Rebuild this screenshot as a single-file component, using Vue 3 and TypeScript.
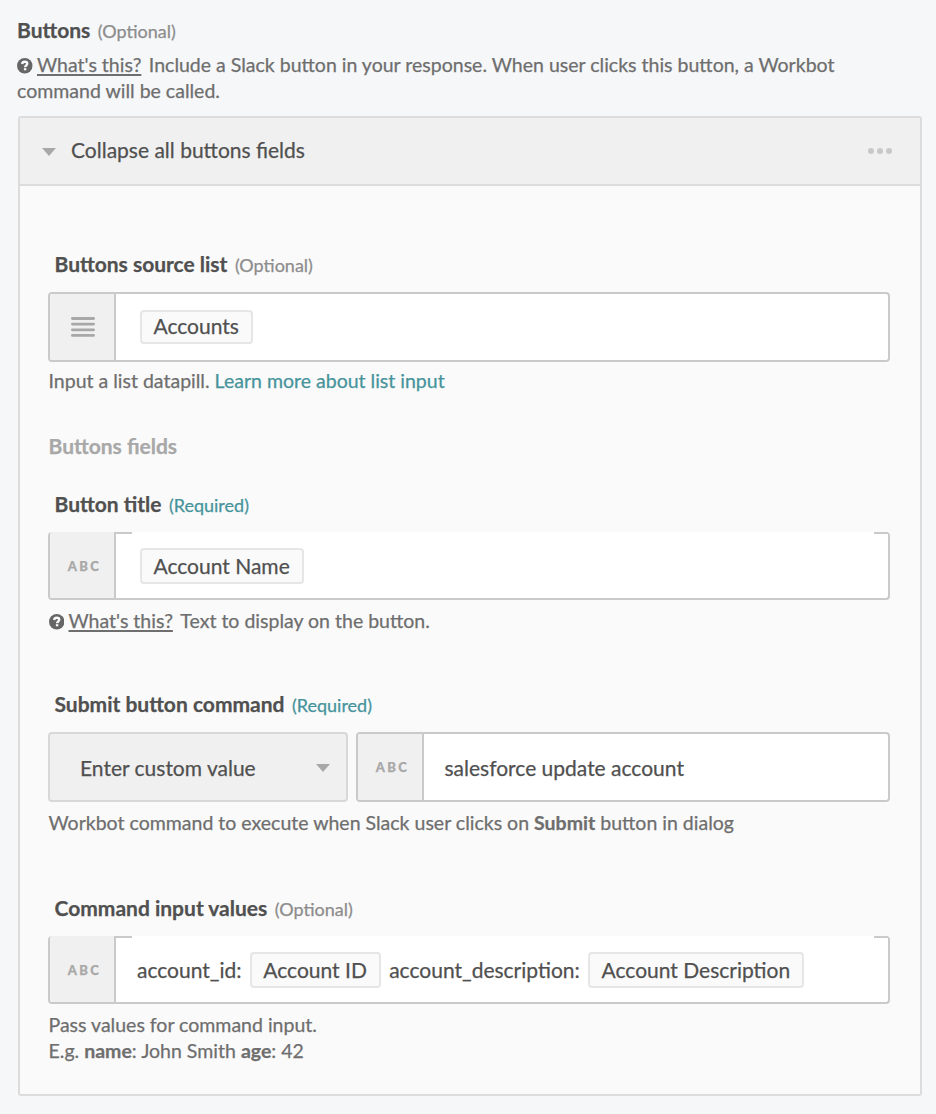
<script setup lang="ts">
interface Segment {
  kind: 'text' | 'pill'
  value: string
}

const commandInputs: Segment[] = [
  { kind: 'text', value: 'account_id:' },
  { kind: 'pill', value: 'Account ID' },
  { kind: 'text', value: 'account_description:' },
  { kind: 'pill', value: 'Account Description' },
]
</script>

<template>
  <main class="form">
    <div class="label outer"><b>Buttons</b><span class="hint">(Optional)</span></div>
    <p class="help intro">
      <svg class="question" viewBox="0 0 16 16"><circle cx="8" cy="8" r="8" /><path d="M5.3 6.2C5.5 4.6 6.6 3.9 8 3.9c1.5 0 2.6.8 2.6 2.1 0 1.8-2.2 1.7-2.2 3.5" /><rect x="7.1" y="10.5" width="2.5" height="2.2" /></svg><span class="what">What's this?</span>Include a Slack button in your response. When user clicks this button, a Workbot command will be called.
    </p>

    <section class="panel">
      <header class="panel-head">
        <svg class="caret" viewBox="0 0 14 8"><path d="M0 0h14L7 8z" /></svg>
        <span class="panel-title">Collapse all buttons fields</span>
        <span class="dots"><i></i><i></i><i></i></span>
      </header>

      <div class="panel-body">
        <div class="label"><b>Buttons source list</b><span class="hint">(Optional)</span></div>
        <div class="input tall">
          <div class="type icon">
            <svg class="list" viewBox="0 0 24 20"><path d="M1.4 1.5h21.2M1.4 7.1h21.2M1.4 12.8h21.2M1.4 18.4h21.2" /></svg>
          </div>
          <div class="content"><span class="pill short">Accounts</span></div>
        </div>
        <p class="help">Input a list datapill. <a class="link">Learn more about list input</a></p>

        <h3 class="group">Buttons fields</h3>

        <div class="label"><b>Button title</b><span class="hint required">(Required)</span></div>
        <div class="input open">
          <div class="type">ABC</div>
          <div class="content"><span class="pill">Account Name</span></div>
        </div>
        <p class="help after-open">
          <svg class="question" viewBox="0 0 16 16"><circle cx="8" cy="8" r="8" /><path d="M5.3 6.2C5.5 4.6 6.6 3.9 8 3.9c1.5 0 2.6.8 2.6 2.1 0 1.8-2.2 1.7-2.2 3.5" /><rect x="7.1" y="10.5" width="2.5" height="2.2" /></svg><span class="what">What's this?</span>Text to display on the button.
        </p>

        <div class="label submit"><b>Submit button command</b><span class="hint required">(Required)</span></div>
        <div class="row">
          <div class="select">
            <span>Enter custom value</span>
            <svg class="caret" viewBox="0 0 14 8"><path d="M0 0h14L7 8z" /></svg>
          </div>
          <div class="input tall">
            <div class="type">ABC</div>
            <div class="content plain">salesforce update account</div>
          </div>
        </div>
        <p class="help after-row">Workbot command to execute when Slack user clicks on <b>Submit</b> button in dialog</p>

        <div class="label command"><b>Command input values</b><span class="hint">(Optional)</span></div>
        <div class="input open">
          <div class="type">ABC</div>
          <div class="content mixed">
            <span v-for="part in commandInputs" :key="part.value" :class="part.kind">{{ part.value }}</span>
          </div>
        </div>
        <p class="help after-open">Pass values for command input.<br />E.g. <b>name</b>: John Smith <b>age</b>: 42</p>
      </div>
    </section>
  </main>
</template>

<style>
body {
  margin: 0;
  background: #f6f7f9;
}
</style>

<style scoped>
.form {
  box-sizing: border-box;
  width: 936px;
  height: 1114px;
  padding: 16px 14px 0 18px;
  overflow: hidden;
  background: #f6f7f9;
  color: #505050;
  font-family: Lato, "Liberation Sans", sans-serif;
  font-size: 21px;
  line-height: 26px;
  -webkit-text-stroke: 0.25px currentColor;
}
.label {
  display: flex;
  align-items: baseline;
  height: 30px;
  padding-left: 6.5px;
  line-height: 27px;
}
.label b {
  font-weight: 700;
}
.label.outer {
  padding-left: 0;
  margin-left: -1px;
}
.hint {
  margin-left: 7.5px;
  color: #8c8c8c;
  font-size: 18px;
}
.hint.required {
  color: #46939b;
}
.help {
  height: 26px;
  margin: 6px 0 0 0.5px;
  color: #6e6e6e;
  font-size: 19.53px;
  line-height: 26px;
}
.help.intro {
  width: 860px;
  height: 52px;
  margin: 6px 0 12px -1px;
}
.question {
  width: 15.5px;
  height: 15.5px;
  margin-right: 4.5px;
  vertical-align: -1.5px;
  fill: #666;
}
.question path {
  fill: none;
  stroke: #fafafa;
  stroke-width: 2.4;
}
.question rect {
  fill: #fafafa;
}
.what {
  margin-right: 7.5px;
  text-decoration: underline;
  text-decoration-thickness: 2px;
  text-decoration-skip-ink: none;
  text-underline-offset: 2px;
}
.panel {
  box-sizing: border-box;
  height: 980px;
  border: 2px solid #dcdcdc;
  border-radius: 3px;
  background: #fafafa;
}
.panel-head {
  display: flex;
  align-items: center;
  height: 66px;
  padding: 0 28px 0 22px;
  border-bottom: 2px solid #dcdcdc;
  background: #f0f0f0;
}
.caret {
  width: 14px;
  height: 8px;
  fill: #a8a8a8;
}
.panel-head .caret {
  margin-top: 2px;
}
.panel-title {
  margin: 0 0 2px 15px;
}
.dots {
  display: flex;
  gap: 3px;
  margin-left: auto;
}
.dots i {
  width: 6px;
  height: 6px;
  border-radius: 50%;
  background: #c8c8c8;
}
.panel-body {
  padding: 64px 30px 0 28px;
}
.input {
  box-sizing: border-box;
  display: flex;
  height: 68px;
  margin-top: 12px;
  border: 2px solid #cacaca;
  border-radius: 4px;
  background: #fff;
}
.input.tall {
  height: 70px;
}
.input.open {
  border-top: 0;
}
.type {
  display: flex;
  flex: none;
  align-items: center;
  justify-content: center;
  box-sizing: border-box;
  width: 66px;
  padding-left: 5px;
  border-right: 2px solid #cacaca;
  border-radius: 2px 0 0 2px;
  background: #f0f0f0;
  color: #a8a8a8;
  font-size: 13px;
  font-weight: 900;
  letter-spacing: 2.4px;
}
.type.icon {
  padding-left: 2px;
}
.open .type {
  padding-top: 2px;
}
.list {
  width: 24px;
  height: 20px;
  fill: none;
  stroke: #a8a8a8;
  stroke-width: 2.8;
  stroke-linecap: round;
}
.content {
  display: flex;
  flex: 1;
  align-items: center;
  padding-left: 24px;
}
/* The top edge is only drawn as short stubs beside the editable area. */
.open .content {
  padding-top: 2px;
  background:
    linear-gradient(#cacaca, #cacaca) left top / 16px 2px no-repeat,
    linear-gradient(#cacaca, #cacaca) right top / 14px 2px no-repeat;
}
.content.plain {
  padding: 2px 0 0 20.5px;
}
.content.mixed {
  padding-left: 21px;
}
.pill {
  box-sizing: border-box;
  height: 36px;
  padding: 0 12px 0 11.5px;
  border: 2px solid #e6e6e6;
  border-radius: 4px;
  background: #fafafa;
  line-height: 31px;
  white-space: nowrap;
}
.pill.short {
  height: 34px;
  line-height: 28px;
}
.mixed .pill {
  margin: 0 8.3px 0 8.3px;
}
.link {
  color: #46939b;
}
.group {
  height: 30px;
  margin: 38px 0 28px 0.5px;
  color: #a8a8a8;
  font-size: 21px;
  font-weight: 700;
  line-height: 28px;
}
.help.after-open {
  margin-top: 8px;
}
.label.submit {
  margin-top: 56px;
}
.row {
  display: flex;
  gap: 8px;
  margin-top: 12px;
}
.row .input {
  flex: 1;
  margin-top: 0;
}
.select {
  box-sizing: border-box;
  display: flex;
  align-items: center;
  justify-content: space-between;
  width: 300px;
  height: 70px;
  padding: 2px 16px 0 30px;
  border: 2px solid #d8d8d8;
  border-radius: 4px;
  background: #f0f0f0;
}
.help.after-row {
  margin-top: 8px;
}
.label.command {
  margin-top: 58px;
}
</style>
